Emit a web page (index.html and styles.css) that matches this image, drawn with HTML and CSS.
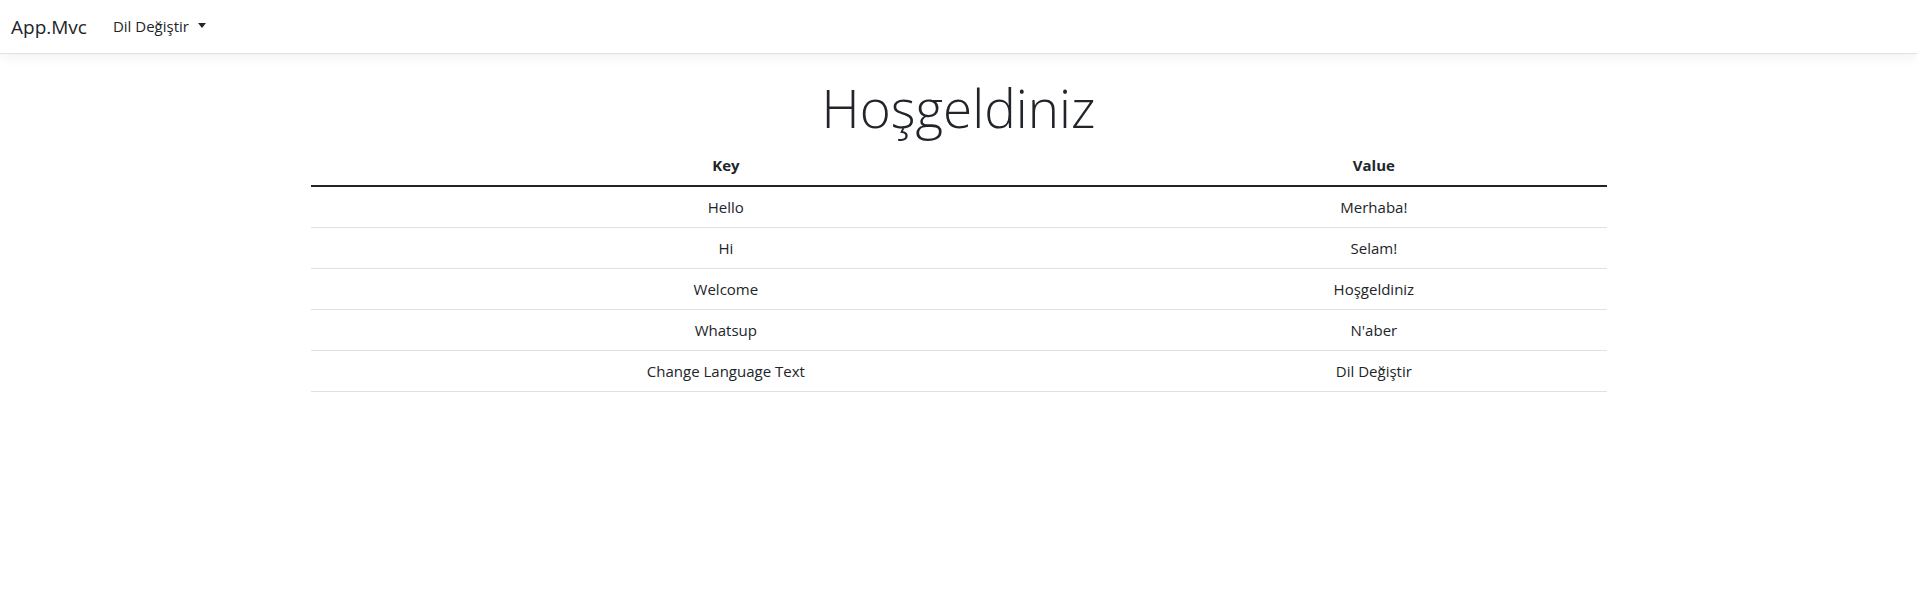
FILE: index.html
```html
<!DOCTYPE html>
<html lang="tr">
<head>
<meta charset="utf-8">
<title>App.Mvc</title>
<link rel="stylesheet" href="styles.css">
</head>
<body>
<header>
  <nav class="navbar">
    <div class="navbar-inner">
      <a class="brand" href="#">App.Mvc</a>
      <ul class="nav">
        <li class="nav-item">
          <a class="nav-link" href="#">Dil Değiştir<span class="caret"></span></a>
        </li>
      </ul>
    </div>
  </nav>
</header>
<div class="container">
  <main class="main">
    <div class="center">
      <h1 class="display">Hoşgeldiniz</h1>
      <table class="table">
        <thead>
          <tr><th class="col-key">Key</th><th>Value</th></tr>
        </thead>
        <tbody>
          <tr><td>Hello</td><td>Merhaba!</td></tr>
          <tr><td>Hi</td><td>Selam!</td></tr>
          <tr><td>Welcome</td><td>Hoşgeldiniz</td></tr>
          <tr><td>Whatsup</td><td>N'aber</td></tr>
          <tr><td>Change Language Text</td><td>Dil Değiştir</td></tr>
        </tbody>
      </table>
    </div>
  </main>
</div>
</body>
</html>
```

FILE: styles.css
```css
* { box-sizing: border-box; }
html, body { margin: 0; padding: 0; }
body {
  font-family: "Open Sans", "Noto Sans", "Liberation Sans", sans-serif;
  font-size: 16px;
  line-height: 1.5;
  color: #212529;
  background: #fff;
}
.navbar {
  background: #fff;
  border-bottom: 1px solid #dee2e6;
  box-shadow: 0 4px 12px rgba(0,0,0,.05);
  margin-bottom: 16px;
  height: 54px;
}
.navbar-inner {
  display: flex;
  align-items: center;
  height: 100%;
  padding: 0 11px;
}
.brand {
  font-size: 19px;
  line-height: 30px;
  color: #212529;
  text-decoration: none;
  margin-right: 18px;
}
.nav { list-style: none; margin: 0; padding: 0; display: flex; }
.nav-link {
  display: block;
  padding: 8px 8px;
  color: #212529;
  text-decoration: none;
  font-size: 15px;
}
.caret {
  display: inline-block;
  margin-left: 9px;
  vertical-align: 4px;
  border-top: 5px solid #212529;
  border-left: 4.5px solid transparent;
  border-right: 4.5px solid transparent;
}
.container {
  max-width: 1320px;
  margin: 0 auto;
  padding: 0 12px;
}
.center { text-align: center; }
.display {
  font-size: 53px;
  font-weight: 300;
  line-height: 67px;
  padding-top: 4px;
  margin: 0 0 4px;
}
.table {
  width: 100%;
  border-collapse: collapse;
  color: #212529;
  font-size: 15px;
}
.table th, .table td {
  padding: 8px;
  line-height: 24px;
  text-align: center;
  border-bottom: 1px solid #dee2e6;
}
.table th { font-weight: 700; }
.table thead th { border-bottom: 2px solid #212529; }
.col-key { width: 64.1%; }
```
